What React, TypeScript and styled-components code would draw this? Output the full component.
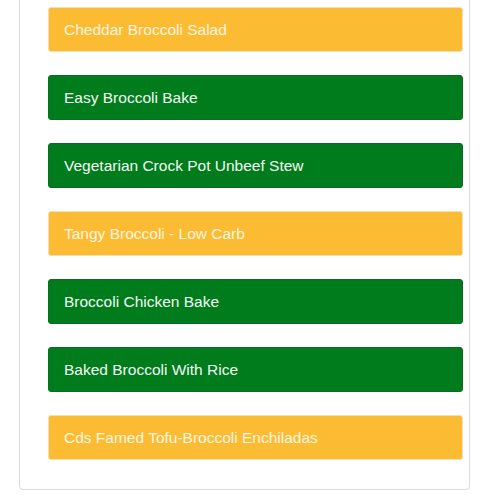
import styled, { createGlobalStyle } from "styled-components";

const recipes: { title: string; tone: "warm" | "green" }[] = [
  { title: "Cheddar Broccoli Salad", tone: "warm" },
  { title: "Easy Broccoli Bake", tone: "green" },
  { title: "Vegetarian Crock Pot Unbeef Stew", tone: "green" },
  { title: "Tangy Broccoli - Low Carb", tone: "warm" },
  { title: "Broccoli Chicken Bake", tone: "green" },
  { title: "Baked Broccoli With Rice", tone: "green" },
  { title: "Cds Famed Tofu-Broccoli Enchiladas", tone: "warm" },
];

export default function App() {
  return (
    <>
      <GlobalStyle />
      <Card>
        <List>
          {recipes.map((r) => (
            <Item key={r.title} $tone={r.tone}>
              {r.title}
            </Item>
          ))}
        </List>
      </Card>
    </>
  );
}

const GlobalStyle = createGlobalStyle`
  body {
    margin: 0;
    background: #fff;
    font-family: "Liberation Sans", Arial, sans-serif;
    overflow: hidden;
  }
`;

const Card = styled.div`
  margin: -30px 30px 0 19px;
  padding: 36px 6px 29px 28px;
  border: 1px solid #dcdcdc;
  border-radius: 4px;
  box-shadow: 0 1px 2px rgba(0, 0, 0, 0.06);
`;

const List = styled.ul`
  list-style: none;
  margin: 0;
  padding: 0;
  display: flex;
  flex-direction: column;
  gap: 23px;
`;

const Item = styled.li<{ $tone: "warm" | "green" }>`
  height: 45px;
  box-sizing: border-box;
  display: flex;
  align-items: center;
  padding: 0 15px;
  border-radius: 3px;
  font-size: 15.5px;
  background: ${(p) => (p.$tone === "warm" ? "#fbbb32" : "#007c1c")};
  color: ${(p) => (p.$tone === "warm" ? "#fff6e2" : "#f4f9f4")};
  border: 1px solid ${(p) => (p.$tone === "warm" ? "#f2dfb4" : "#0d6a22")};
`;
